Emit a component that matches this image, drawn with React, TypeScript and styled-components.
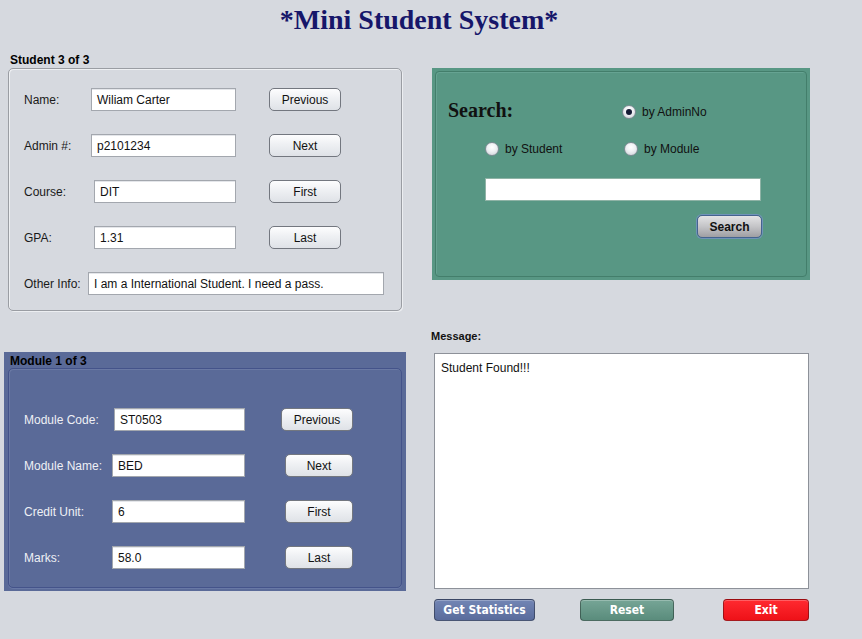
import * as React from 'react'
import styled, { createGlobalStyle } from 'styled-components'

const GlobalStyle = createGlobalStyle`
  html, body {
    margin: 0;
    padding: 0;
    background: #d6d9df;
  }
  body {
    font-family: "Liberation Sans", Arial, sans-serif;
    font-size: 12px;
    color: #000;
  }
`

const Page = styled.div`
  width: 862px;
  height: 639px;
  overflow: hidden;
  background: #d6d9df;
`

const Title = styled.h1`
  margin: 0;
  padding-top: 4px;
  height: 45px;
  box-sizing: border-box;
  width: 838px;
  text-align: center;
  font-family: "Liberation Serif", "Times New Roman", serif;
  font-size: 28px;
  font-weight: bold;
  color: #16166a;
`

const Main = styled.div`
  display: flex;
  padding-left: 4px;
`

const LeftCol = styled.div`
  width: 402px;
  display: flex;
  flex-direction: column;
`

const RightCol = styled.div`
  width: 378px;
  margin-left: 26px;
  display: flex;
  flex-direction: column;
`

const Caption = styled.div`
  font-weight: bold;
  font-size: 12px;
  height: 16px;
  line-height: 16px;
  padding-left: 6px;
  margin-top: 7px;
`

const StudentPanel = styled.div`
  margin-left: 4px;
  width: 394px;
  height: 243px;
  box-sizing: border-box;
  border: 1px solid #9a9da3;
  border-radius: 5px;
  box-shadow: inset 1px 1px 0 #eef0f3, 1px 1px 0 #eceef1;
  padding-top: 19px;
  display: flex;
  flex-direction: column;
  gap: 23px;
`

const ModuleBox = styled.div`
  margin-top: 41px;
  width: 402px;
  height: 239px;
  box-sizing: border-box;
  background: #5a6a98;
  padding-top: 2px;
`

const ModuleCaption = styled.div`
  font-weight: bold;
  font-size: 12px;
  height: 14px;
  line-height: 14px;
  padding-left: 6px;
`

const ModulePanel = styled.div`
  margin: 0 0 0 4px;
  width: 394px;
  height: 220px;
  box-sizing: border-box;
  border: 1px solid #44538a;
  border-radius: 5px;
  box-shadow: inset 1px 1px 0 #6a79a4, 0 1px 0 #6878a6;
  padding-top: 39px;
  display: flex;
  flex-direction: column;
  gap: 23px;
`

const Row = styled.div`
  display: flex;
  align-items: center;
  height: 23px;
  padding-left: 15px;
`

const Label = styled.span<{ $w: number; $light?: boolean }>`
  width: ${({ $w }) => $w}px;
  flex-shrink: 0;
  font-size: 12px;
  color: ${({ $light }) => ($light ? '#eef0f5' : '#1a1a1a')};
`

const Field = styled.div<{ $w: number }>`
  width: ${({ $w }) => $w}px;
  height: 23px;
  box-sizing: border-box;
  background: #fff;
  border: 1px solid #a3a7ae;
  box-shadow: inset 0 1px 0 #e4e6ea;
  padding: 0 5px;
  display: flex;
  align-items: center;
  font-size: 12px;
  color: #111;
  white-space: nowrap;
  overflow: hidden;
`

const NavButton = styled.button<{ $w: number; $ml: number }>`
  margin-left: ${({ $ml }) => $ml}px;
  width: ${({ $w }) => $w}px;
  height: 23px;
  box-sizing: border-box;
  border: 1px solid #73777f;
  border-radius: 5px;
  background: linear-gradient(#fdfdfe 0%, #eef0f3 45%, #dfe2e7 100%);
  font-family: "Liberation Sans", Arial, sans-serif;
  font-size: 12px;
  color: #111;
  padding: 0;
  cursor: pointer;
`

const SearchPanel = styled.div`
  margin-top: 23px;
  width: 378px;
  height: 212px;
  box-sizing: border-box;
  background: #589784;
  border: 3px solid #589784;
`

const SearchInner = styled.div`
  height: 100%;
  box-sizing: border-box;
  border: 1px solid #437e6b;
  border-radius: 4px;
  box-shadow: inset 1px 1px 0 #66a392;
  padding-top: 25px;
`

const SearchTop = styled.div`
  display: flex;
  align-items: center;
  padding-left: 12px;
  height: 30px;
`

const SearchHeading = styled.span`
  width: 174px;
  margin-bottom: 4px;
  font-family: "Liberation Serif", "Times New Roman", serif;
  font-size: 20px;
  font-weight: bold;
  color: #111;
`

const RadioRow = styled.div`
  display: flex;
  align-items: center;
  padding-left: 49px;
  margin-top: 13px;
  height: 18px;
`

const RadioItem = styled.label<{ $w?: number }>`
  display: flex;
  align-items: center;
  gap: 6px;
  width: ${({ $w }) => ($w ? `${$w}px` : 'auto')};
  font-size: 12px;
  color: #111;
`

const RadioDot = styled.span<{ $on?: boolean }>`
  width: 14px;
  height: 14px;
  border-radius: 50%;
  box-sizing: border-box;
  border: 1px solid #7f8d95;
  background: radial-gradient(circle at 50% 35%, #ffffff 0%, #eef0f3 45%, #c9cdd4 100%);
  display: flex;
  align-items: center;
  justify-content: center;
  &::after {
    content: '';
    width: 6px;
    height: 6px;
    border-radius: 50%;
    background: ${({ $on }) => ($on ? '#141a33' : 'transparent')};
  }
`

const SearchField = styled.div`
  margin: 20px 0 0 49px;
  width: 276px;
  height: 23px;
  box-sizing: border-box;
  background: #fff;
  border: 1px solid #8fb3a6;
`

const SearchButton = styled.button`
  margin: 14px 0 0 261px;
  width: 65px;
  height: 23px;
  box-sizing: border-box;
  border: 1px solid #45638f;
  border-radius: 5px;
  box-shadow: 0 0 0 1px #6f93b8;
  background: linear-gradient(#e3e3e5 0%, #c4c4c7 50%, #9f9fa3 100%);
  font-family: "Liberation Sans", Arial, sans-serif;
  font-weight: bold;
  font-size: 12px;
  color: #111;
  padding: 0;
  display: block;
`

const MessageLabel = styled.div`
  margin-top: 49px;
  height: 14px;
  line-height: 14px;
  font-weight: bold;
  font-size: 11px;
  color: #111;
  margin-left: -1px;
`

const MessageBox = styled.div`
  margin: 10px 0 0 2px;
  width: 375px;
  height: 236px;
  box-sizing: border-box;
  background: #fff;
  border: 1px solid #8d9199;
  padding: 7px 6px;
  font-size: 12px;
  color: #111;
`

const ActionBar = styled.div`
  display: flex;
  margin: 10px 0 0 2px;
`

const ActionButton = styled.button<{ $bg: string; $w: number; $ml: number }>`
  margin-left: ${({ $ml }) => $ml}px;
  width: ${({ $w }) => $w}px;
  height: 22px;
  box-sizing: border-box;
  border: 1px solid rgba(0, 0, 0, 0.35);
  border-radius: 4px;
  background: ${({ $bg }) => $bg};
  box-shadow: inset 0 1px 0 rgba(255, 255, 255, 0.25);
  color: #fff;
  font-family: "DejaVu Sans Condensed", "Liberation Sans", sans-serif;
  font-weight: bold;
  font-size: 12px;
  padding: 0;
`

const studentRows = [
  { label: 'Name:', lw: 67, value: 'Wiliam Carter', fw: 145, btn: 'Previous' },
  { label: 'Admin #:', lw: 67, value: 'p2101234', fw: 145, btn: 'Next' },
  { label: 'Course:', lw: 70, value: 'DIT', fw: 142, btn: 'First' },
  { label: 'GPA:', lw: 70, value: '1.31', fw: 142, btn: 'Last' }
]

const moduleRows = [
  { label: 'Module Code:', lw: 90, value: 'ST0503', fw: 131, btn: 'Previous', bw: 72, ml: 36 },
  { label: 'Module Name:', lw: 88, value: 'BED', fw: 133, btn: 'Next', bw: 68, ml: 40 },
  { label: 'Credit Unit:', lw: 88, value: '6', fw: 133, btn: 'First', bw: 68, ml: 40 },
  { label: 'Marks:', lw: 88, value: '58.0', fw: 133, btn: 'Last', bw: 68, ml: 40 }
]

export default function App() {
  return (
    <Page>
      <GlobalStyle />
      <Title>*Mini Student System*</Title>
      <Main>
        <LeftCol>
          <Caption>Student 3 of 3</Caption>
          <StudentPanel>
            {studentRows.map(r => (
              <Row key={r.label}>
                <Label $w={r.lw}>{r.label}</Label>
                <Field $w={r.fw}>{r.value}</Field>
                <NavButton $w={72} $ml={269 - 24 - r.lw - r.fw}>
                  {r.btn}
                </NavButton>
              </Row>
            ))}
            <Row>
              <Label $w={64}>Other Info:</Label>
              <Field $w={296}>I am a International Student. I need a pass.</Field>
            </Row>
          </StudentPanel>

          <ModuleBox>
            <ModuleCaption>Module 1 of 3</ModuleCaption>
            <ModulePanel>
              {moduleRows.map(r => (
                <Row key={r.label}>
                  <Label $w={r.lw} $light>
                    {r.label}
                  </Label>
                  <Field $w={r.fw}>{r.value}</Field>
                  <NavButton $w={r.bw} $ml={r.ml}>
                    {r.btn}
                  </NavButton>
                </Row>
              ))}
            </ModulePanel>
          </ModuleBox>
        </LeftCol>

        <RightCol>
          <SearchPanel>
            <SearchInner>
              <SearchTop>
                <SearchHeading>Search:</SearchHeading>
                <RadioItem>
                  <RadioDot $on />
                  by AdminNo
                </RadioItem>
              </SearchTop>
              <RadioRow>
                <RadioItem $w={139}>
                  <RadioDot />
                  by Student
                </RadioItem>
                <RadioItem>
                  <RadioDot />
                  by Module
                </RadioItem>
              </RadioRow>
              <SearchField />
              <SearchButton>Search</SearchButton>
            </SearchInner>
          </SearchPanel>

          <MessageLabel>Message:</MessageLabel>
          <MessageBox>Student Found!!!</MessageBox>

          <ActionBar>
            <ActionButton $bg="linear-gradient(#7285b4, #5a6c9c)" $w={101} $ml={0}>
              Get Statistics
            </ActionButton>
            <ActionButton $bg="linear-gradient(#76a596, #5a8c7c)" $w={94} $ml={45}>
              Reset
            </ActionButton>
            <ActionButton $bg="linear-gradient(#ff2a30, #ee1118)" $w={86} $ml={49}>
              Exit
            </ActionButton>
          </ActionBar>
        </RightCol>
      </Main>
    </Page>
  )
}
